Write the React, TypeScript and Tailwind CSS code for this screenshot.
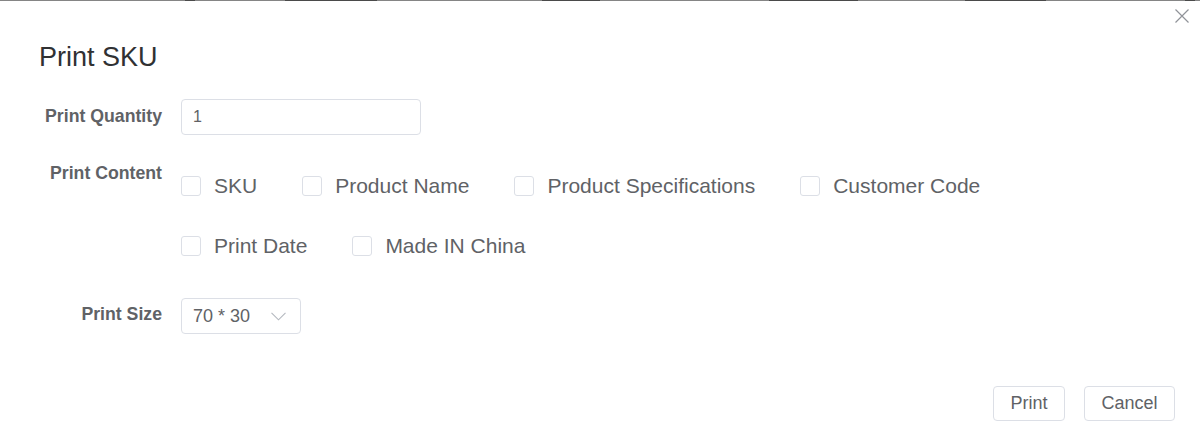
import React from "react";

const Checkbox = ({ label }: { label: string }) => (
  <label className="flex items-center mr-[45px]">
    <span className="w-[20px] h-[20px] border border-[#dcdfe6] rounded-[3px] bg-white shrink-0" />
    <span className="ml-[13px] relative top-[-1px] text-[21px] text-[#606266] leading-none whitespace-nowrap">{label}</span>
  </label>
);

export default function App() {
  const segs = [
    [185, 10],
    [285, 92],
    [542, 58],
    [769, 89],
    [965, 81],
    [1185, 10],
  ];
  return (
    <div className="w-[1200px] h-[440px] bg-white font-['Liberation_Sans',Arial,sans-serif] relative overflow-hidden">
      <div className="relative h-px bg-[#858585]">
        {segs.map(([l, w], i) => (
          <span key={i} className="absolute top-0 h-px bg-[#4a4a4a]" style={{ left: l, width: w }} />
        ))}
      </div>
      <button className="absolute left-[1175px] top-[9px] w-[14px] h-[14px]">
        <svg width="14" height="14" viewBox="0 0 14 14" fill="none" stroke="#909399" strokeWidth="1.2">
          <path d="M0.5 0.5 L13.5 13.5 M13.5 0.5 L0.5 13.5" />
        </svg>
      </button>
      <div className="pt-[38px] pl-[39px]">
        <h1 className="text-[27px] leading-[36px] text-[#303133] font-normal">Print SKU</h1>
      </div>
      <div className="mt-[24px] flex items-center">
        <div className="w-[162px] relative top-[-1px] text-right text-[17.7px] font-bold text-[#606266]">Print Quantity</div>
        <div className="ml-[19px] w-[240px] h-[36px] border border-[#dcdfe6] rounded-[4px] flex items-center px-[11px] text-[16px] text-[#606266]">
          1
        </div>
      </div>
      <div className="mt-[28px] flex items-start">
        <div className="w-[162px] text-right text-[17.7px] leading-[20px] font-bold text-[#606266]">Print Content</div>
        <div className="ml-[19px] pt-[3px] flex flex-col gap-[20px]">
          <div className="h-[40px] flex items-center">
            <Checkbox label="SKU" />
            <Checkbox label="Product Name" />
            <Checkbox label="Product Specifications" />
            <Checkbox label="Customer Code" />
          </div>
          <div className="h-[40px] flex items-center">
            <Checkbox label="Print Date" />
            <Checkbox label="Made IN China" />
          </div>
        </div>
      </div>
      <div className="mt-[32px] flex items-center">
        <div className="w-[162px] relative top-[-2px] text-right text-[17.7px] font-bold text-[#606266]">Print Size</div>
        <div className="ml-[19px] w-[120px] h-[36px] border border-[#dcdfe6] rounded-[4px] flex items-center justify-between pl-[11px] pr-[14px] text-[18px] text-[#606266]">
          <span>70 * 30</span>
          <svg width="15" height="9" viewBox="0 0 15 9" fill="none" stroke="#b4b8bf" strokeWidth="1.1">
            <path d="M0.5 0.8 L7.5 7.8 L14.5 0.8" />
          </svg>
        </div>
      </div>
      <div className="mt-[52px] flex justify-end pr-[25px] gap-[19px]">
        <button className="h-[35px] px-[16.5px] border border-[#dcdfe6] rounded-[4px] text-[18px] text-[#606266] bg-white">
          Print
        </button>
        <button className="h-[35px] px-[16.5px] border border-[#dcdfe6] rounded-[4px] text-[18px] text-[#606266] bg-white">
          Cancel
        </button>
      </div>
    </div>
  );
}
